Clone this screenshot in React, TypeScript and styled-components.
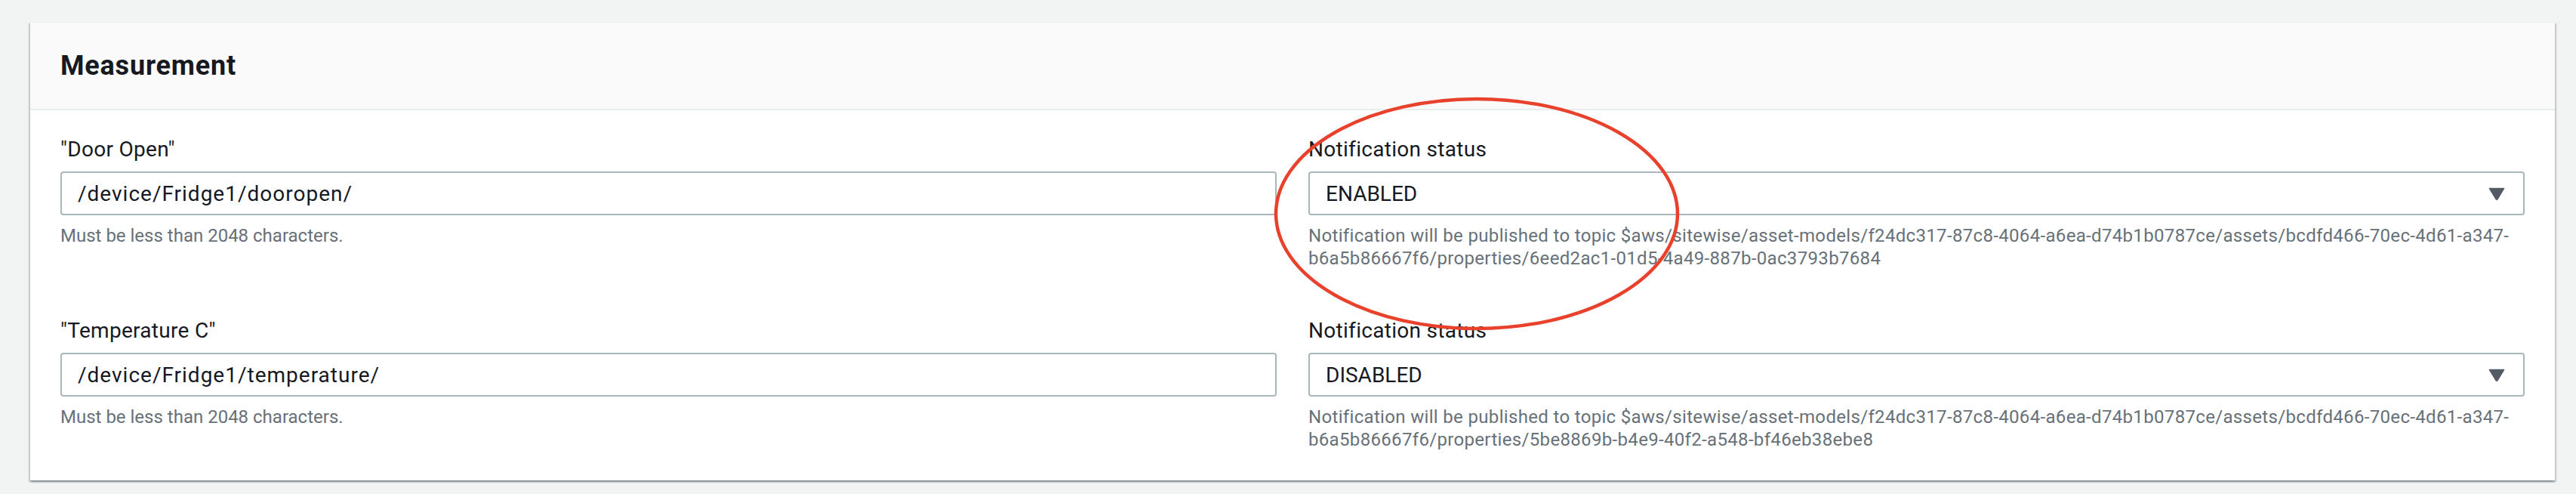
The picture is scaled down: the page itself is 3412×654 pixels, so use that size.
import React from "react";
import styled, { createGlobalStyle } from "styled-components";

const GlobalStyle = createGlobalStyle`
  html, body {
    margin: 0;
    padding: 0;
    background: #f2f3f3;
  }
  body {
    font-family: Roboto, "Liberation Sans", Arial, sans-serif;
    color: #16191f;
  }
`;

const Page = styled.div`
  position: relative;
  width: 3412px;
  height: 654px;
  box-sizing: border-box;
  padding: 29px 28px 0 40px;
  background: #f2f3f3;
  overflow: hidden;
`;

const Card = styled.section`
  background: #ffffff;
  border-top: 1px solid #eaeded;
  box-shadow: 0 2px 2px 0 rgba(0, 28, 36, 0.3), 2px 2px 2px 0 rgba(0, 28, 36, 0.15),
    -2px 2px 2px 0 rgba(0, 28, 36, 0.15);
`;

const Header = styled.header`
  height: 116px;
  box-sizing: border-box;
  padding: 0 40px;
  display: flex;
  align-items: center;
  background: #fafafa;
  border-bottom: 2px solid #eaeded;
`;

const Title = styled.h2`
  margin: 0;
  font-size: 36px;
  line-height: 44px;
  font-weight: 700;
  letter-spacing: 0.8px;
  color: #16191f;
`;

const Body = styled.div`
  padding: 32px 40px 39px 40px;
  display: grid;
  grid-template-columns: 1fr 1fr;
  column-gap: 42px;
  row-gap: 61px;
`;

const Field = styled.div`
  display: flex;
  flex-direction: column;
  min-width: 0;
`;

const Label = styled.label`
  font-size: 28px;
  line-height: 40px;
  letter-spacing: 0.3px;
  color: #16191f;
  margin-bottom: 9px;
`;

const Control = styled.div`
  height: 58px;
  box-sizing: border-box;
  border: 2px solid #aab7b8;
  border-radius: 4px;
  background: #ffffff;
  display: flex;
  align-items: center;
  justify-content: space-between;
  padding: 0 24px 0 21px;
  font-size: 28px;
  color: #16191f;
`;

const Value = styled.span<{ $track?: number }>`
  white-space: nowrap;
  letter-spacing: ${(p) => p.$track ?? 0}px;
`;

const Arrow = styled.svg`
  width: 22px;
  height: 17px;
  flex: none;
`;

const Hint = styled.div<{ $track?: number }>`
  margin-top: 12px;
  font-size: 24px;
  line-height: 30px;
  letter-spacing: ${(p) => p.$track ?? 0}px;
  color: #687078;
  white-space: nowrap;
`;

const Annotation = styled.svg`
  position: absolute;
  left: 0;
  top: 0;
  width: 3412px;
  height: 654px;
  pointer-events: none;
`;

type Row = { name: string; path: string; status: string; prop: string };

const rows: Row[] = [
  {
    name: '"Door Open"',
    path: "/device/Fridge1/dooropen/",
    status: "ENABLED",
    prop: "6eed2ac1-01d5-4a49-887b-0ac3793b7684",
  },
  {
    name: '"Temperature C"',
    path: "/device/Fridge1/temperature/",
    status: "DISABLED",
    prop: "5be8869b-b4e9-40f2-a548-bf46eb38ebe8",
  },
];

const DropArrow = () => (
  <Arrow viewBox="0 0 22 17">
    <path
      d="M1.5 1.5 H20.5 L12 15.5 Q11 16.8 10 15.5 Z"
      fill="#545b64"
      stroke="#545b64"
      strokeWidth="1.5"
      strokeLinejoin="round"
    />
  </Arrow>
);

export default function App() {
  return (
    <>
      <GlobalStyle />
      <Page>
        <Card>
          <Header>
            <Title>Measurement</Title>
          </Header>
          <Body>
            {rows.map((r) => (
              <React.Fragment key={r.name}>
                <Field>
                  <Label>{r.name}</Label>
                  <Control>
                    <Value $track={1}>{r.path}</Value>
                  </Control>
                  <Hint>Must be less than 2048 characters.</Hint>
                </Field>
                <Field>
                  <Label>Notification status</Label>
                  <Control>
                    <Value>{r.status}</Value>
                    <DropArrow />
                  </Control>
                  <Hint $track={0.33}>
                    Notification will be published to topic
                    $aws/sitewise/asset-models/f24dc317-87c8-4064-a6ea-d74b1b0787ce/assets/bcdfd466-70ec-4d61-a347-
                    <br />
                    b6a5b86667f6/properties/{r.prop}
                  </Hint>
                </Field>
              </React.Fragment>
            ))}
          </Body>
        </Card>
        <Annotation viewBox="0 0 3412 654">
          <ellipse cx="1956" cy="283" rx="266" ry="152" fill="none" stroke="#e8412c" strokeWidth="4.5" />
        </Annotation>
      </Page>
    </>
  );
}
